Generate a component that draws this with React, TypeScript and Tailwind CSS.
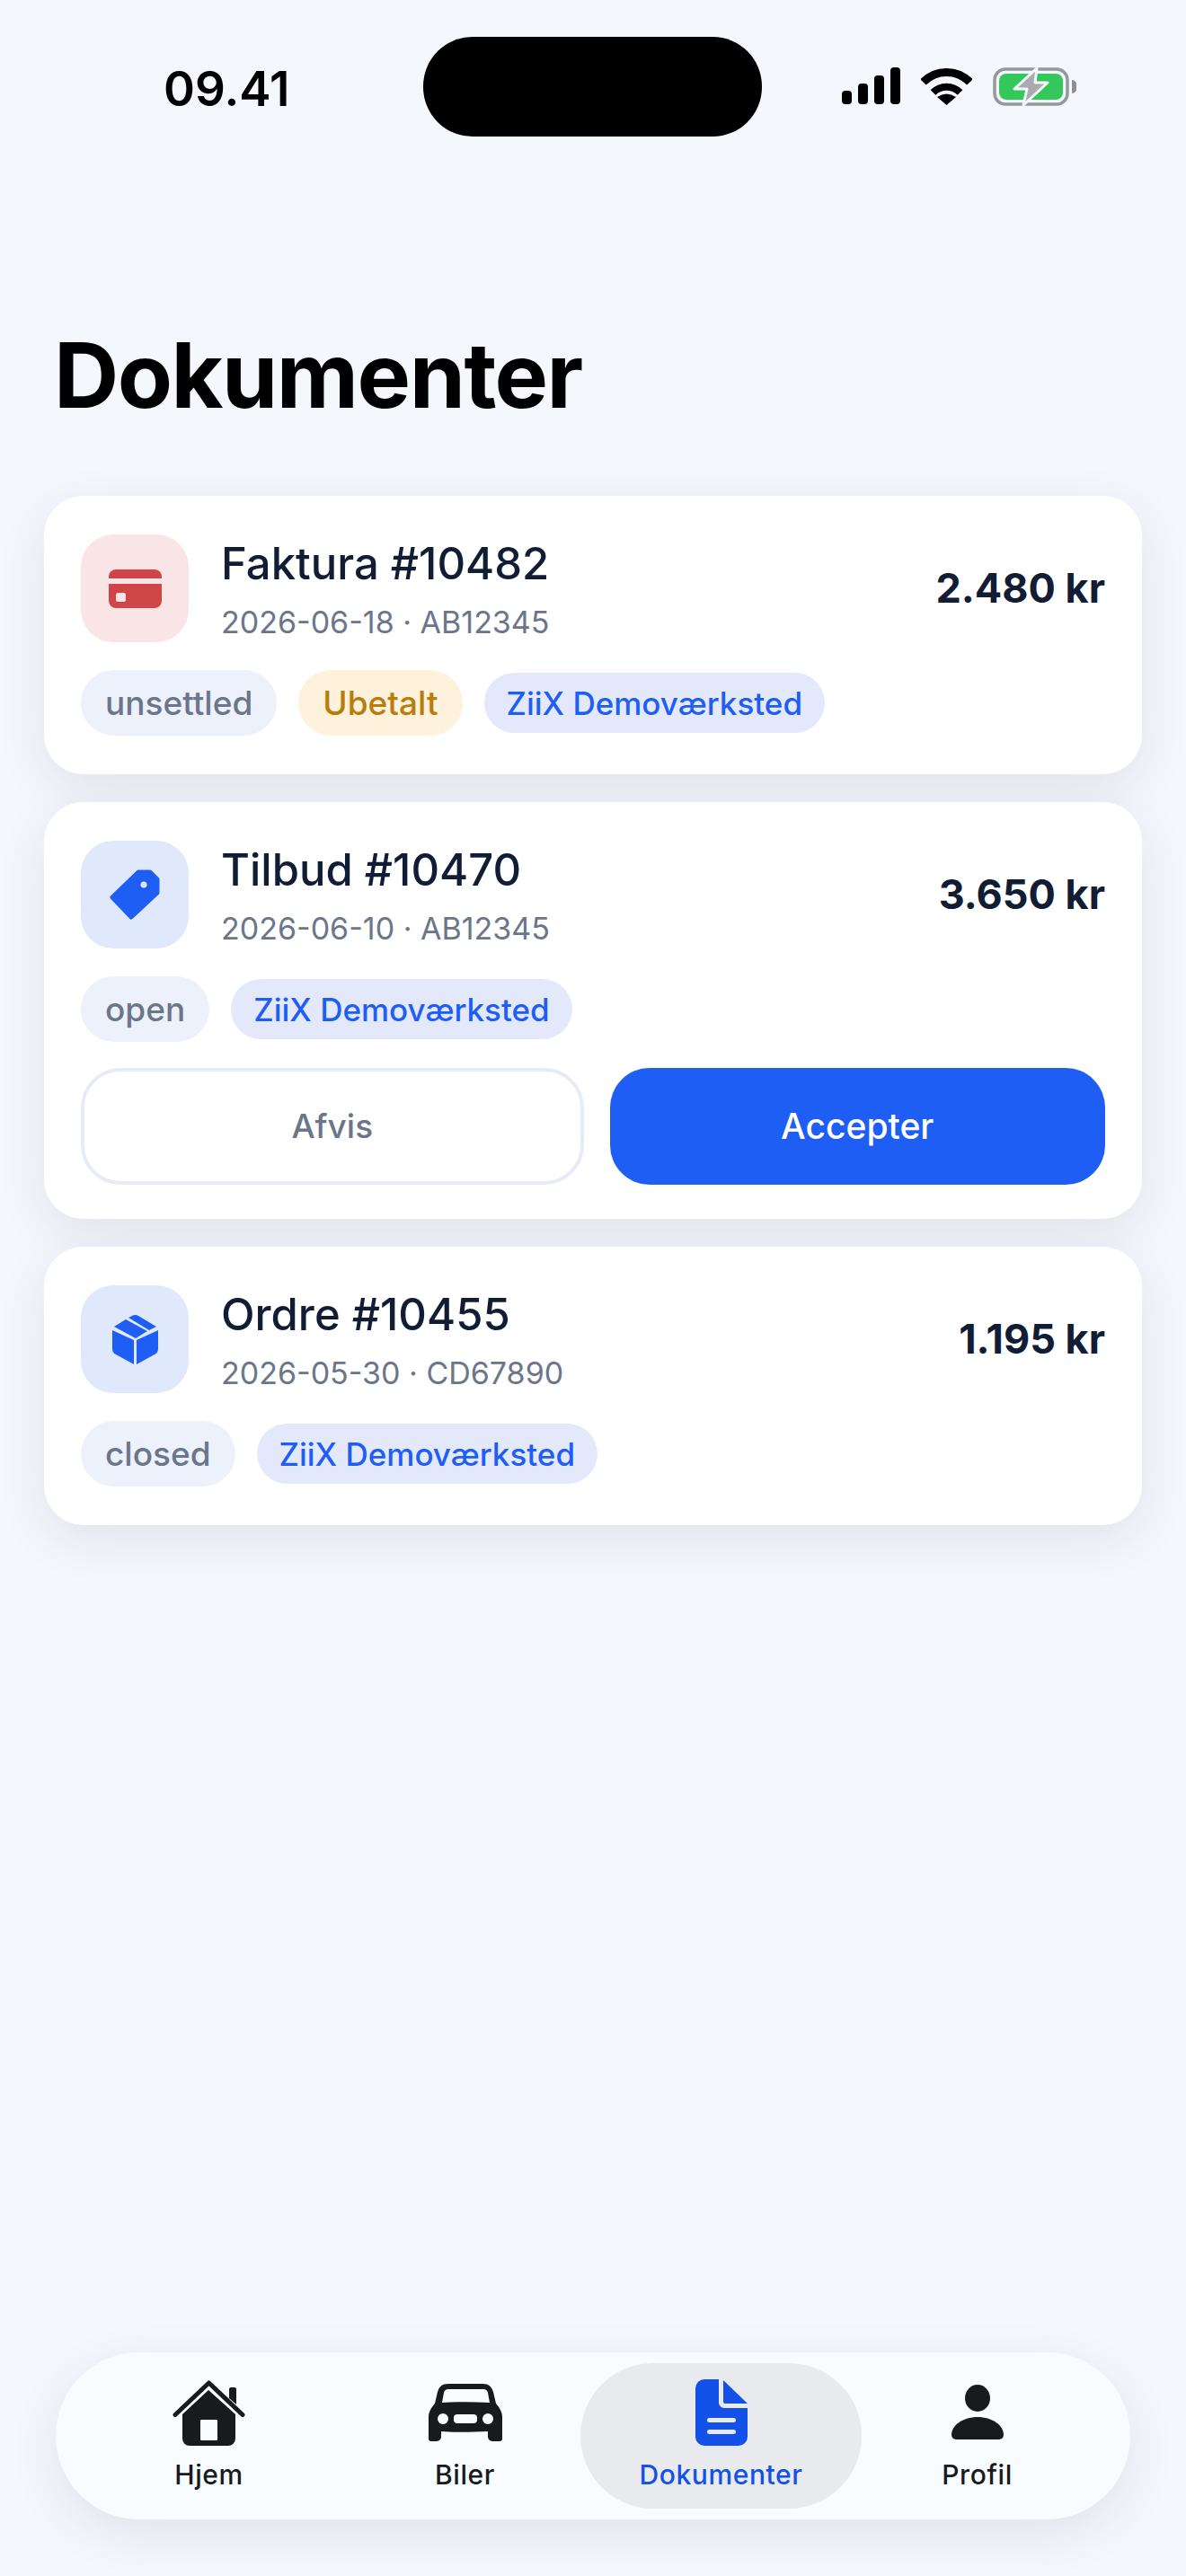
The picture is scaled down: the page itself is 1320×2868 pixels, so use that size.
import type { ReactNode } from "react";

type DocumentItem = {
  title: string;
  meta: string;
  amount: string;
  status: string;
  unpaid?: boolean;
  actions?: boolean;
  iconBox: string;
  icon: ReactNode;
};

// Drawn from the reference, sizes are screenshot pixels
function CardIcon() {
  return (
    <svg width="59" height="43" viewBox="0 0 59 43" fill="#d04648">
      <path d="M0 10V8a8 8 0 0 1 8-8h43a8 8 0 0 1 8 8v2z" />
      <path d="M0 16h59v19a8 8 0 0 1-8 8H8a8 8 0 0 1-8-8z" />
      <rect x="8" y="26" width="11" height="10" rx="2.5" fill="#f9e5e6" />
    </svg>
  );
}

function TagIcon() {
  return (
    <svg width="56" height="56" viewBox="0 0 56 56">
      <path
        d="M32 3h13l8 8v15L24 53 3 31z"
        fill="#1f5ef5"
        stroke="#1f5ef5"
        strokeWidth="5"
        strokeLinejoin="round"
      />
      <ellipse cx="38" cy="17" rx="3.5" ry="3.5" fill="#e0e8fc" />
    </svg>
  );
}

function BoxIcon() {
  return (
    <svg width="51" height="55" viewBox="0 0 51 55" fill="#1f5ef5">
      <path d="M0 17l24 11v27L4 44a7 7 0 0 1-4-6z" />
      <path d="M51 17L27 28v27l20-11a7 7 0 0 0 4-6z" />
      <path d="M2 13L15 5l24 13-13 8z" />
      <path d="M18 3l4-2a7 7 0 0 1 7 0l20 12-8 4z" />
    </svg>
  );
}

function HomeIcon() {
  return (
    <svg width="81" height="73" viewBox="0 0 81 73">
      <path d="M11 38L40 11l30 27v27a8 8 0 0 1-8 8H19a8 8 0 0 1-8-8z" fill="#171b1e" />
      <rect x="31" y="44" width="19" height="23" rx="1" fill="#f9fcff" />
      <path d="M3 38.500L40.500 3 78 38.500" fill="none" stroke="#171b1e" strokeWidth="5" strokeLinecap="round" strokeLinejoin="round" />
      <path d="M63 14V10a2 2 0 0 1 2-2h4a2 2 0 0 1 2 2v17l-8-7z" fill="#171b1e" />
    </svg>
  );
}

function CarIcon() {
  return (
    <svg width="82" height="64" viewBox="0 0 82 64" fill="#171b1e">
      <path
        fillRule="evenodd"
        d="M22 0h38c7 0 10 3 12 9l3 13c4 5 7 9 7 15v24a3 3 0 0 1-3 3h-8a5 5 0 0 1-5-5v-6c-20 1-40 1-52 0v6a5 5 0 0 1-5 5H3a3 3 0 0 1-3-3V37c0-6 3-10 7-15l3-13C12 3 15 0 22 0zm0 6c-3 0-4 1-5 4l-2 11c17-1 35-1 53 0l-2-11c-1-3-2-4-5-4z"
      />
      <circle cx="16" cy="39" r="6" fill="#f9fcff" />
      <circle cx="66" cy="39" r="6" fill="#f9fcff" />
      <rect x="28" y="34" width="26" height="10" rx="4" fill="#f9fcff" />
    </svg>
  );
}

function DocIcon() {
  return (
    <svg width="58" height="74" viewBox="0 0 58 74" fill="#1351e8">
      <path d="M10 0h16v26a6 6 0 0 0 6 6h26v32a10 10 0 0 1-10 10H10A10 10 0 0 1 0 64V10A10 10 0 0 1 10 0z" />
      <path d="M31 1l27 26H33a2 2 0 0 1-2-2z" />
      <rect x="13" y="43" width="32" height="5" rx="2.500" fill="#e8eaed" />
      <rect x="13" y="56" width="32" height="5" rx="2.500" fill="#e8eaed" />
    </svg>
  );
}

function PersonIcon() {
  return (
    <svg width="58" height="62" viewBox="0 0 58 62" fill="#171b1e">
      <ellipse cx="29" cy="15" rx="14" ry="15" />
      <path d="M5 61h48a5 5 0 0 0 5-5C58 45 45 36 29 36S0 45 0 56a5 5 0 0 0 5 5z" />
    </svg>
  );
}

const DOCUMENTS: DocumentItem[] = [
  {
    title: "Faktura #10482",
    meta: "2026-06-18 · AB12345",
    amount: "2.480 kr",
    status: "unsettled",
    unpaid: true,
    iconBox: "bg-[#f9e5e6]",
    icon: <CardIcon />,
  },
  {
    title: "Tilbud #10470",
    meta: "2026-06-10 · AB12345",
    amount: "3.650 kr",
    status: "open",
    actions: true,
    iconBox: "bg-[#e0e8fc]",
    icon: <TagIcon />,
  },
  {
    title: "Ordre #10455",
    meta: "2026-05-30 · CD67890",
    amount: "1.195 kr",
    status: "closed",
    iconBox: "bg-[#e0e8fc]",
    icon: <BoxIcon />,
  },
];

const TABS = [
  { label: "Hjem", icon: <HomeIcon /> },
  { label: "Biler", icon: <CarIcon /> },
  { label: "Dokumenter", icon: <DocIcon />, active: true },
  { label: "Profil", icon: <PersonIcon /> },
];

function StatusBar() {
  return (
    <div className="flex h-[152px] items-start pt-[41px]">
      <div className="w-[471px] pl-[182px] pt-[27px] text-[53px] leading-[62px] font-semibold text-black">
        09.41
      </div>
      <div className="h-[111px] w-[377px] rounded-[55px] bg-black" />
      <div className="flex items-start pl-[89px] pt-[34px]">
        <svg width="65" height="41" viewBox="0 0 65 41" fill="#000">
          <rect x="0" y="26" width="11" height="15" rx="4" />
          <rect x="18" y="18" width="11" height="23" rx="4" />
          <rect x="36" y="9" width="11" height="32" rx="4" />
          <rect x="54" y="0" width="11" height="41" rx="4" />
        </svg>
        <svg className="ml-[23px]" width="57" height="42" viewBox="0 0 57 42" fill="none" stroke="#000">
          <path d="M2.500 16.500A36 36 0 0 1 54.500 16.500" strokeWidth="9" />
          <path d="M13.500 28A21 21 0 0 1 43.500 28" strokeWidth="8" />
          <path d="M28.500 42L18 33Q28.500 26 39 33Z" fill="#000" stroke="none" />
        </svg>
        <svg className="ml-[23px]" width="93" height="43" viewBox="0 0 93 43">
          <rect x="2" y="2" width="81" height="39" rx="12" fill="none" stroke="#97989c" strokeWidth="3.500" />
          <rect x="7" y="7" width="71" height="29" rx="8" fill="#34c759" />
          <path d="M88 14a6 7.500 0 0 1 0 15z" fill="#8e8e93" />
          <path d="M49 1L24 24h14l-4 18 27-25H47z" fill="#a9abb0" stroke="#f4f7fc" strokeWidth="3" strokeLinejoin="round" />
        </svg>
      </div>
    </div>
  );
}

function Pill({ className, children }: { className: string; children: ReactNode }) {
  return (
    <span className={`flex items-center rounded-full leading-[44px] font-medium ${className}`}>
      {children}
    </span>
  );
}

function DocumentCard({ item }: { item: DocumentItem }) {
  return (
    <div className="rounded-[44px] bg-white px-[41px] pt-[43px] pb-[43px] shadow-[0_16px_56px_rgba(30,41,70,0.09)] has-[button]:pb-[38px]">
      <div className="flex items-center">
        <div className={`flex h-[120px] w-[120px] items-center justify-center rounded-[36px] ${item.iconBox}`}>
          {item.icon}
        </div>
        <div className="ml-[36px] flex-1">
          <div className="mt-[3px] text-[49px] leading-[58px] font-medium text-[#111c35]">{item.title}</div>
          <div className="mt-[14px] text-[34px] leading-[44px] text-[#6b768a]">{item.meta}</div>
        </div>
        <div className="text-[45px] leading-[56px] font-bold text-[#111c35]">{item.amount}</div>
      </div>
      <div className="mt-[31px] flex items-center gap-[24px]">
        <Pill className="h-[73px] bg-[#edf1fb] px-[27px] text-[37px] text-[#6b768a]">{item.status}</Pill>
        {item.unpaid && <Pill className="h-[73px] bg-[#fef2dc] px-[27px] text-[37px] text-[#b87d0c]">Ubetalt</Pill>}
        <Pill className="h-[67px] bg-[#e3e9fb] px-[25px] text-[35px] text-[#1f5ef5]">ZiiX Demoværksted</Pill>
      </div>
      {item.actions && (
        <div className="mt-[29px] flex gap-[29px]">
          <button className="h-[130px] flex-1 rounded-[44px] border-[4px] border-[#e6ebf5] bg-white text-[37px] font-medium text-[#6b768a]">
            Afvis
          </button>
          <button className="h-[130px] flex-1 rounded-[44px] bg-[#1f5ef5] text-[39px] font-medium text-white">
            Accepter
          </button>
        </div>
      )}
    </div>
  );
}

function TabBar() {
  return (
    <nav className="mx-[62px] mb-[63px] mt-auto grid h-[186px] grid-cols-4 items-center rounded-[93px] bg-[#f9fcff] px-[28px] shadow-[0_16px_56px_rgba(30,41,70,0.09)]">
      {TABS.map((tab) => (
        <div
          key={tab.label}
          className={`flex h-[162px] w-[313px] flex-col items-center justify-self-center rounded-[81px] ${
            tab.active ? "bg-[#e8eaed] text-[#1351e8]" : "text-[#171b1e]"
          }`}
        >
          <div className="flex h-[100px] items-center pt-[10px]">{tab.icon}</div>
          <span className="mt-[6px] text-[30px] leading-[36px] font-medium tracking-[0.6px]">{tab.label}</span>
        </div>
      ))}
    </nav>
  );
}

export default function App() {
  return (
    <div className="flex min-h-[2868px] flex-col bg-[#f4f7fc] font-['Inter',sans-serif]">
      <StatusBar />
      <h1 className="mt-[208px] pl-[60px] text-[100px] leading-[116px] font-bold tracking-[-1.5px] text-black">Dokumenter</h1>
      <div className="mt-[76px] flex flex-col gap-[31px] px-[49px]">
        {DOCUMENTS.map((item) => (
          <DocumentCard key={item.title} item={item} />
        ))}
      </div>
      <TabBar />
    </div>
  );
}
